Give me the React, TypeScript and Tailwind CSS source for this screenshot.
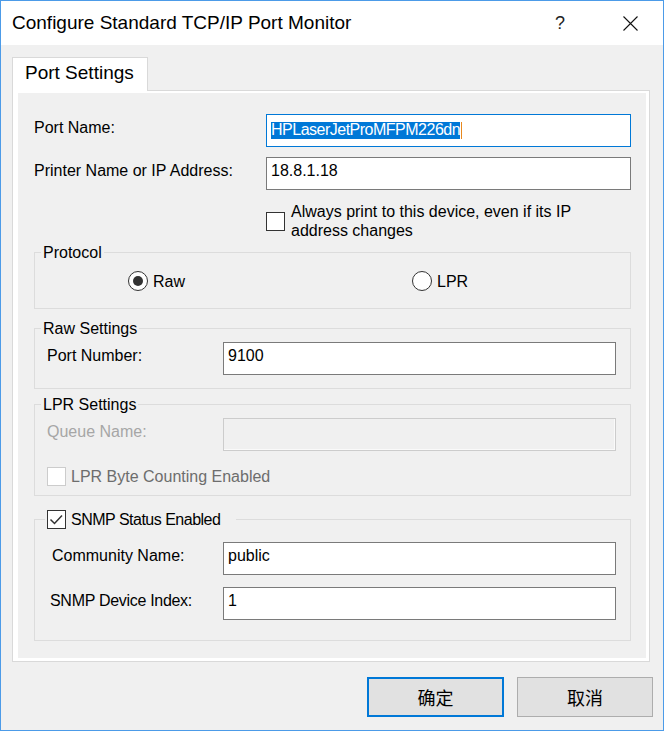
import type { ReactNode } from "react";

function TextBox({
  children,
  disabled = false,
  focused = false,
  className = "",
}: {
  children?: ReactNode;
  disabled?: boolean;
  focused?: boolean;
  className?: string;
}) {
  const tone = focused
    ? "border-[#0078d7] bg-white"
    : disabled
      ? "border-[#cccccc] bg-[#f0f0f0] shadow-[inset_-1px_-1px_0_#fafafa]"
      : "border-[#7a7a7a] bg-white";
  return (
    <div className={`h-[33px] shrink-0 border pl-[4px] pt-[3px] leading-[19px] ${tone} ${className}`}>
      {children}
    </div>
  );
}

function CheckBox({ checked = false, disabled = false }: { checked?: boolean; disabled?: boolean }) {
  return (
    <span
      className={`flex h-[19px] w-[19px] shrink-0 items-center justify-center border bg-white ${
        disabled ? "border-[#cccccc]" : "border-[#333333]"
      }`}
    >
      {checked ? (
        <svg width="17" height="17" viewBox="0 0 17 17" aria-hidden="true">
          <polyline points="2.5,8.5 6.5,12.5 14,4.5" fill="none" stroke="#333333" strokeWidth="1.5" />
        </svg>
      ) : null}
    </span>
  );
}

function Radio({ checked = false, label }: { checked?: boolean; label: string }) {
  return (
    <span className="flex items-center gap-[5px]">
      <span className="flex h-[20px] w-[20px] items-center justify-center rounded-full border border-[#333333] bg-white">
        {checked ? <span className="h-[10px] w-[10px] rounded-full bg-[#333333]" /> : null}
      </span>
      <span>{label}</span>
    </span>
  );
}

function Group({ legend, children }: { legend: ReactNode; children: ReactNode }) {
  return (
    <fieldset className="m-0 min-w-0 border border-[#dcdcdc] p-0">
      {legend}
      {children}
    </fieldset>
  );
}

function GroupTitle({ children }: { children: ReactNode }) {
  return <legend className="ml-[6px] px-[2px] leading-[19px]">{children}</legend>;
}

export default function App() {
  return (
    <div className="flex h-[731px] w-[664px] flex-col border border-[#4c9be8] bg-[#f0f0f0] font-['Liberation_Sans',Arial,sans-serif] text-[16px] leading-[19px] text-black">
      <div className="flex h-[44px] shrink-0 items-center bg-white pr-[10px]">
        <span className="ml-[11px] flex-1 text-[19px] leading-[22px]">Configure Standard TCP/IP Port Monitor</span>
        <span className="flex w-[46px] justify-center text-[18px] leading-[22px] text-[#222222]">?</span>
        <span className="ml-[24px] flex w-[46px] justify-center">
          <svg width="15" height="15" viewBox="0 0 15 15" aria-hidden="true">
            <path d="M0.5 0.5 L14.5 14.5 M14.5 0.5 L0.5 14.5" stroke="#111111" strokeWidth="1.1" />
          </svg>
        </span>
      </div>

      <div className="flex flex-col pl-[11px] pt-[12px]">
        <div className="relative z-10 -mb-px h-[34px] w-[136px] border border-b-0 border-[#d9d9d9] bg-white pl-[12px] pt-[4px] text-[19px] leading-[22px]">
          Port Settings
        </div>
        <div className="h-[572px] w-[638px] border border-[#d9d9d9] bg-white pb-[3px] pl-[5px] pr-[3px] pt-[2px]">
          <div className="flex h-full flex-col bg-[#f0f0f0] pl-[16px] pr-[15px] pt-[21px]">
            <div className="flex items-start">
              <span className="mt-[4px] w-[232px]">Port Name:</span>
              <TextBox focused className="w-[365px] !pt-[5px]">
                <span className="relative inline-block h-[17px] bg-[#0078d7] text-[16px] leading-[16px] tracking-[-0.5px] text-white">
                  HPLaserJetProMFPM226dn
                  <span className="absolute -right-[2px] top-0 h-[17px] w-px bg-[#e8891f]" />
                </span>
              </TextBox>
            </div>
            <div className="mt-[10px] flex items-start">
              <span className="mt-[4px] w-[232px]">Printer Name or IP Address:</span>
              <TextBox className="w-[365px]">18.8.1.18</TextBox>
            </div>
            <div className="mt-[12px] flex items-center pl-[232px]">
              <CheckBox />
              <span className="ml-[6px]">
                Always print to this device, even if its IP
                <br />
                address changes
              </span>
            </div>

            <div className="mt-[3px]">
              <Group legend={<GroupTitle>Protocol</GroupTitle>}>
                <div className="pb-[17px] pt-[9px]">
                  <div className="flex h-[20px] items-center pl-[93px]">
                    <span className="w-[284px]">
                      <Radio checked label="Raw" />
                    </span>
                    <Radio label="LPR" />
                  </div>
                </div>
              </Group>
            </div>

            <div className="mt-[10px]">
              <Group legend={<GroupTitle>Raw Settings</GroupTitle>}>
                <div className="flex items-start pb-[13px] pl-[12px] pt-[4px]">
                  <span className="mt-[4px] w-[176px]">Port Number:</span>
                  <TextBox className="w-[393px]">9100</TextBox>
                </div>
              </Group>
            </div>

            <div className="mt-[6px]">
              <Group legend={<GroupTitle>LPR Settings</GroupTitle>}>
                <div className="flex flex-col pb-[9px] pl-[12px] pt-[4px]">
                  <div className="flex items-start">
                    <span className="mt-[4px] w-[176px] text-[#a6a6a6]">Queue Name:</span>
                    <TextBox disabled className="w-[393px]" />
                  </div>
                  <div className="mt-[16px] flex items-center">
                    <CheckBox disabled />
                    <span className="ml-[5px] text-[#6d6d6d]">LPR Byte Counting Enabled</span>
                  </div>
                </div>
              </Group>
            </div>

            <div className="mt-[14px]">
              <Group
                legend={
                  <legend className="ml-[10px] pl-[2px] pr-[16px] leading-[19px]">
                    <span className="flex items-center">
                      <CheckBox checked />
                      <span className="ml-[5px] tracking-[-0.5px]">SNMP Status Enabled</span>
                    </span>
                  </legend>
                }
              >
                <div className="flex flex-col pb-[20px] pl-[12px] pt-[13px]">
                  <div className="flex items-start">
                    <span className="mt-[4px] w-[176px] pl-[5px]">Community Name:</span>
                    <TextBox className="w-[393px]">public</TextBox>
                  </div>
                  <div className="mt-[12px] flex items-start">
                    <span className="mt-[4px] w-[176px] pl-[3px] tracking-[-0.3px]">SNMP Device Index:</span>
                    <TextBox className="w-[393px]">1</TextBox>
                  </div>
                </div>
              </Group>
            </div>
          </div>
        </div>

        <div className="mt-[15px] flex justify-end gap-[13px] pr-[10px] font-['Noto_Sans_CJK_SC',sans-serif] text-[18px]">
          <button
            type="button"
            className="flex h-[40px] w-[137px] items-center justify-center border-2 border-[#0078d7] bg-[#e1e1e1] leading-[20px]"
          >
            确定
          </button>
          <button
            type="button"
            className="flex h-[40px] w-[136px] items-center justify-center border border-[#adadad] bg-[#e1e1e1] leading-[20px]"
          >
            取消
          </button>
        </div>
      </div>
    </div>
  );
}
